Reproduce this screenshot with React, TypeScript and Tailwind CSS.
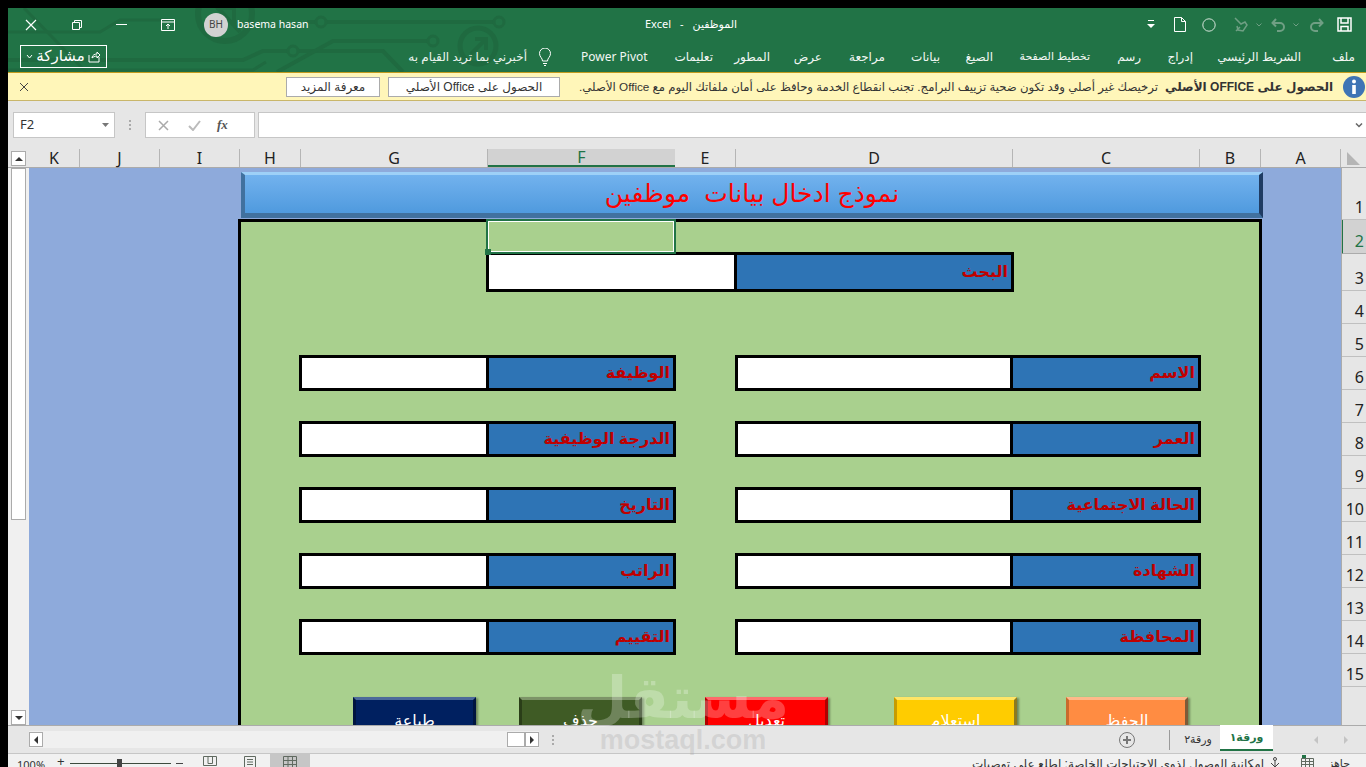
import React from "react";

const ui = "font-['Noto_Sans','DejaVu_Sans',sans-serif]";
const ar = "font-['Liberation_Sans','DejaVu_Sans',sans-serif]";

function Circuit() {
  return (
    <svg className="absolute inset-0 h-full w-full pointer-events-none" viewBox="0 0 1358 64" fill="none" stroke="#1f6a40" strokeWidth="3">
      <path d="M0 24H92L112 12H160" />
      <path d="M16 0L78 64" />
      <circle cx="217" cy="6" r="27" strokeWidth="6" />
      <path d="M208 -2L232 24M208 0H226V16" strokeWidth="4" />
      <path d="M299 14H308M318 14H486" strokeWidth="4" />
      <circle cx="313" cy="14" r="5" />
      <circle cx="491" cy="14" r="5" />
      <path d="M0 52H235L255 43H280M290 43H375L395 64" strokeWidth="4" />
      <circle cx="285" cy="43" r="5" />
      <path d="M0 62H245L258 54" />
      <path d="M269 64L325 33H420" strokeWidth="4" />
      <circle cx="425" cy="33" r="5" />
      <circle cx="470" cy="38" r="18" strokeWidth="5" />
      <path d="M463 46L478 31M467 31H478V42" strokeWidth="4" />
    </svg>
  );
}

function TitleBar() {
  return (
    <div className="relative h-[65px] shrink-0 bg-[#217346] border-b border-[#c29b1e] text-white">
      <Circuit />
      <div className="relative h-[33px] flex items-center text-[11px]">
        <svg className="ml-[16px] h-[14px] w-[14px]" viewBox="0 0 14 14" stroke="#fff" strokeWidth="1.2" fill="none"><path d="M2 2l10 10M12 2L2 12" /></svg>
        <svg className="ml-[33px] h-[12px] w-[12px]" viewBox="0 0 12 12" stroke="#fff" fill="none"><path d="M1.500 3.500h7v7h-7zM3.500 3.500v-2h7v7h-2" /></svg>
        <div className="ml-[33px] h-px w-[11px] bg-white" />
        <svg className="ml-[34px] h-[12px] w-[14px]" viewBox="0 0 14 12" stroke="#fff" fill="none"><path d="M.5.5h13v11H.5zM.5 3h13M7 10V5M5 7l2-2 2 2" /></svg>
        <div className={`ml-[29px] h-[24px] w-[24px] rounded-full bg-[#d2d2d2] text-[#444] text-[10px] flex items-center justify-center ${ui}`}>BH</div>
        <div className={`ml-[9px] w-[80px] text-[10.5px] ${ui}`}>basema hasan</div>
        <div className={`ml-[328px] flex gap-[9px] text-[11px] ${ui}`}>
          <span>Excel</span><span>-</span><span dir="rtl">الموظفين</span>
        </div>
        <svg className="ml-[410px] h-[9px] w-[8px]" viewBox="0 0 8 9" fill="#fff"><path d="M1 0h6v1H1zM0 4h8L4 8z" /></svg>
        <svg className="ml-[19px] h-[15px] w-[12px]" viewBox="0 0 12 15" stroke="#fff" fill="none"><path d="M.5.5h7l4 4v10H.5zM7.500.5v4h4" /></svg>
        <svg className="ml-[16px] h-[14px] w-[14px]" viewBox="0 0 14 14" stroke="#d5e4da" fill="none"><circle cx="7" cy="7" r="6.200" /></svg>
        <svg className="ml-[16px] h-[17px] w-[17px]" viewBox="0 0 17 17" stroke="#6f9f84" strokeWidth="1.500" fill="none"><path d="M3 2l6 6 4-2 2 3-4 6-5-1-1-4M4 15l4-4" /></svg>
        <svg className="ml-[7px] h-[4px] w-[6px]" viewBox="0 0 6 4" stroke="#6f9f84" fill="none"><path d="M.5.5L3 3 5.500.5" /></svg>
        <svg className="ml-[9px] h-[14px] w-[14px]" viewBox="0 0 14 14" stroke="#6f9f84" strokeWidth="2" fill="none"><path d="M5 1L1.500 5 5 8.500M2 5h7a3.500 3.500 0 010 8H6" /></svg>
        <svg className="ml-[8px] h-[4px] w-[6px]" viewBox="0 0 6 4" stroke="#6f9f84" fill="none"><path d="M.5.5L3 3 5.500.5" /></svg>
        <svg className="ml-[11px] h-[14px] w-[14px]" viewBox="0 0 14 14" stroke="#6f9f84" strokeWidth="2" fill="none"><path d="M9 1l3.500 4L9 8.500M12 5H5a3.500 3.500 0 000 8h3" /></svg>
        <svg className="ml-[13px] h-[15px] w-[15px]" viewBox="0 0 15 15" stroke="#fff" strokeWidth="1.500" fill="none"><path d="M1 1h13v13H1zM4 1v5h7V1M4 14V9.500h7V14" /></svg>
      </div>
      <div className="relative h-[31px] flex items-center text-[11px]">
        <div className={`ml-[12px] w-[87px] h-[23px] border border-white flex items-center justify-center gap-[3px] ${ar}`}>
          <svg className="h-[6px] w-[7px]" viewBox="0 0 7 6" stroke="#fff" fill="none"><path d="M1 1l2.500 3L6 1" /></svg>
          <span dir="rtl" className="text-[15px]">مشاركة</span>
          <svg className="h-[13px] w-[13px]" viewBox="0 0 13 13" stroke="#fff" fill="none"><path d="M1 5v7h10V7M4 8c0-3 3-4 5-4V2l3 3-3 3V6C7 6 5 7 4 8z" /></svg>
        </div>
        <div dir="rtl" className={`ml-[298px] w-[122px] whitespace-nowrap text-[12px] text-[#ecf3ee] ${ar}`}>أخبرني بما تريد القيام به</div>
        <svg className="ml-[11px] h-[18px] w-[14px]" viewBox="0 0 14 18" stroke="#fff" fill="none"><path d="M4.500 13c0-3-3-4-3-7.500a5.500 5.500 0 0111 0C12.500 9 9.500 10 9.500 13zM5 15.500h4M6 17.500h2" /></svg>
        <div className={`ml-[29px] flex items-center whitespace-nowrap ${ar} text-[12px] text-[#f3f7f4]`}>
          <span className={`w-[67px] text-[12px] ${ui}`}>Power Pivot</span>
          <span dir="rtl" className="ml-[27px] w-[38px] text-center">تعليمات</span>
          <span dir="rtl" className="ml-[27px] w-[30px] text-center">المطور</span>
          <span dir="rtl" className="ml-[28px] w-[24px] text-center">عرض</span>
          <span dir="rtl" className="ml-[28px] w-[35px] text-center">مراجعة</span>
          <span dir="rtl" className="ml-[27px] w-[28px] text-center">بيانات</span>
          <span dir="rtl" className="ml-[26px] w-[27px] text-center">الصيغ</span>
          <span dir="rtl" className="ml-[27px] w-[70px] text-center text-[11px]">تخطيط الصفحة</span>
          <span dir="rtl" className="ml-[28px] w-[23px] text-center">رسم</span>
          <span dir="rtl" className="ml-[28px] w-[24px] text-center">إدراج</span>
          <span dir="rtl" className="ml-[26px] w-[82px] text-center">الشريط الرئيسي</span>
          <span dir="rtl" className="ml-[34px] w-[20px] text-center">ملف</span>
        </div>
      </div>
    </div>
  );
}

function YellowBar() {
  return (
    <div className={`h-[28px] shrink-0 bg-[#fff6b9] border-b border-[#c9b66a] flex items-center text-[12px] text-[#333] ${ar}`}>
      <svg className="ml-[11px] h-[10px] w-[10px]" viewBox="0 0 10 10" stroke="#444" fill="none"><path d="M1 1l8 8M9 1L1 9" /></svg>
      <div dir="rtl" className="ml-[257px] h-[20px] w-[94px] bg-white border border-[#ababab] flex items-center justify-center">معرفة المزيد</div>
      <div dir="rtl" className="ml-[8px] h-[20px] w-[172px] bg-white border border-[#ababab] flex items-center justify-center whitespace-nowrap">الحصول على Office الأصلي</div>
      <div dir="rtl" className="ml-[10px] w-[588px] whitespace-nowrap text-[11.7px]">ترخيصك غير أصلي وقد تكون ضحية تزييف البرامج. تجنب انقطاع الخدمة وحافظ على أمان ملفاتك اليوم مع Office الأصلي.</div>
      <div dir="rtl" className="ml-[10px] w-[165px] whitespace-nowrap font-bold text-[12px]">الحصول على OFFICE الأصلي</div>
      <svg className="ml-[10px] h-[22px] w-[22px]" viewBox="0 0 22 22"><circle cx="11" cy="11" r="11" fill="#3f74b5" /><circle cx="11" cy="5.500" r="2" fill="#fff" /><rect x="9.200" y="9" width="3.600" height="9" fill="#fff" /></svg>
    </div>
  );
}

function FormulaBar() {
  return (
    <div className={`h-[48px] shrink-0 bg-[#e6e6e6] pt-[11px] pl-[5px] flex items-start text-[#333] ${ui}`}>
      <div className="h-[26px] w-[102px] bg-white border border-[#c6c6c6] flex items-center justify-between pl-[6px] pr-[5px] text-[13px]">
        F2
        <svg className="h-[4px] w-[7px]" viewBox="0 0 7 4" fill="#777"><path d="M0 0h7L3.500 4z" /></svg>
      </div>
      <div className="w-[30px] h-[26px] flex flex-col items-center justify-center gap-[2px]">
        <span className="h-[2px] w-[2px] bg-[#aaa]" /><span className="h-[2px] w-[2px] bg-[#aaa]" /><span className="h-[2px] w-[2px] bg-[#aaa]" />
      </div>
      <div className="h-[26px] w-[110px] bg-white border border-[#c6c6c6] flex items-center pl-[12px]">
        <svg className="h-[11px] w-[11px]" viewBox="0 0 11 11" stroke="#aaa" strokeWidth="1.500" fill="none"><path d="M1 1l9 9M10 1L1 10" /></svg>
        <svg className="ml-[19px] h-[11px] w-[13px]" viewBox="0 0 13 11" stroke="#bbb" strokeWidth="2" fill="none"><path d="M1 6l4 4 7-9" /></svg>
        <span className="ml-[16px] text-[13px] italic font-bold font-['Liberation_Serif',serif] text-[#555]">fx</span>
      </div>
      <div className="ml-[3px] h-[26px] flex-1 bg-white border-y border-l border-[#c6c6c6] flex items-center justify-end pr-[3px]">
        <svg className="h-[5px] w-[8px]" viewBox="0 0 8 5" stroke="#666" strokeWidth="1.500" fill="none"><path d="M1 .5l3 3 3-3" /></svg>
      </div>
    </div>
  );
}

const cols: [string, number][] = [["K", 51], ["J", 80], ["I", 80], ["H", 61], ["G", 187], ["F", 187], ["E", 61], ["D", 277], ["C", 187], ["B", 61], ["A", 80]];
const rows: [string, number][] = [["1", 52], ["2", 34], ["3", 37], ["4", 33], ["5", 33], ["6", 33], ["7", 33], ["8", 33], ["9", 33], ["10", 33], ["11", 33], ["12", 33], ["13", 33], ["14", 33], ["15", 33]];

function ColHeaders() {
  return (
    <div className={`h-[19px] shrink-0 flex bg-[#e6e6e6] border-b border-[#ababab] text-[16px] text-[#222] ${ui}`}>
      <div className="w-[21px] shrink-0 pl-[3px] pt-[2px]">
        <div className="h-[15px] w-[15px] bg-white border border-[#ababab] flex items-center justify-center">
          <svg className="h-[4px] w-[8px]" viewBox="0 0 8 4" fill="#333"><path d="M4 0l4 4H0z" /></svg>
        </div>
      </div>
      {cols.map(([c, w]) =>
        c === "F" ? (
          <div key={c} className="border-b-2 border-[#217346] bg-[#d2d2d2] text-[#217346] flex items-center justify-center" style={{ width: w }}>{c}</div>
        ) : (
          <div key={c} className="border-r border-[#b5b5b5] flex items-center justify-center" style={{ width: w }}>{c}</div>
        )
      )}
      <div className="flex-1 flex items-center justify-center">
        <svg className="h-[13px] w-[13px]" viewBox="0 0 13 13" fill="#b5b5b5"><path d="M0 0l13 13H0z" /></svg>
      </div>
    </div>
  );
}

function RowHeaders() {
  return (
    <div className={`w-[25px] shrink-0 border-l border-[#ababab] bg-[#e6e6e6] overflow-hidden text-[16px] text-[#222] ${ui}`}>
      {rows.map(([r, h]) => (
        <div key={r} style={{ height: h }} className={r === "2" ? "flex items-end justify-end pr-[2px] border-b border-[#ababab] bg-[#d2d2d2] text-[#217346] border-l-2 border-l-[#217346] -ml-px" : "flex items-end justify-end pr-[2px] border-b border-[#c0c0c0]"}>{r}</div>
      ))}
    </div>
  );
}

function Field({ label, width, whiteW }: { label: string; width: string; whiteW: string }) {
  return (
    <div className={`border-[3px] border-black flex ${width}`}>
      <div className={`bg-white border-r-[3px] border-black ${whiteW}`} />
      <div dir="rtl" className={`flex-1 flex items-center bg-[#2e74b5] pr-[3px] text-[16px] font-bold text-[#c00000] whitespace-nowrap ${ar}`}>{label}</div>
    </div>
  );
}

function Btn({ label, className }: { label: string; className: string }) {
  return (
    <div className={`h-[50px] border-[3px] flex items-start justify-center pt-[9px] text-white text-[16px] shadow-[2px_1px_2px_rgba(0,0,0,0.35)] ${ar} ${className}`}>
      <span dir="rtl">{label}</span>
    </div>
  );
}

function Sheet() {
  return (
    <div className="relative flex-1 bg-[#8eaadb] overflow-hidden">
      <div dir="rtl" className={`ml-[212px] mt-[4px] h-[46px] w-[1022px] border-x-[4px] border-t-[3px] border-b-[5px] border-t-[#9ed0f7] border-b-[#41719f] border-l-[#41719f] border-r-[#1f3c63] bg-gradient-to-b from-[#72b2ee] to-[#4f9ade] flex items-center justify-center text-[25px] text-[#ff0000] whitespace-pre ${ar}`}>
        نموذج ادخال بيانات  موظفين
      </div>
      <div className="relative ml-[209px] mt-[1px] w-[1024px] h-[520px] border-[3px] border-black bg-[#a9d08e]">
        <div className="absolute left-[245px] -top-[3px] h-[35px] w-[190px] border-2 border-[#217346] outline outline-1 -outline-offset-3 outline-white">
          <div className="absolute -left-[3px] -bottom-[3px] h-[6px] w-[6px] bg-[#217346]" />
        </div>
        <div className="pt-[30px] pl-[245px]">
          <Field label="البحث" width="w-[528px] h-[40px]" whiteW="w-[248px]" />
        </div>
        <div className="mt-[63px] pl-[58px] grid grid-cols-[377px_466px] gap-x-[59px] gap-y-[30px]">
          <Field label="الوظيفة" width="w-[377px] h-[36px]" whiteW="w-[187px]" />
          <Field label="الاسم" width="w-[466px] h-[36px]" whiteW="w-[275px]" />
          <Field label="الدرجة الوظيفية" width="w-[377px] h-[36px]" whiteW="w-[187px]" />
          <Field label="العمر" width="w-[466px] h-[36px]" whiteW="w-[275px]" />
          <Field label="التاريخ" width="w-[377px] h-[36px]" whiteW="w-[187px]" />
          <Field label="الحالة الاجتماعية" width="w-[466px] h-[36px]" whiteW="w-[275px]" />
          <Field label="الراتب" width="w-[377px] h-[36px]" whiteW="w-[187px]" />
          <Field label="الشهادة" width="w-[466px] h-[36px]" whiteW="w-[275px]" />
          <Field label="التقييم" width="w-[377px] h-[36px]" whiteW="w-[187px]" />
          <Field label="المحافظة" width="w-[466px] h-[36px]" whiteW="w-[275px]" />
        </div>
        <div className="mt-[42px] pl-[112px] flex">
          <Btn label="طباعة" className="w-[123px] bg-[#002060] border-t-[#4d6a9a] border-x-[#001540] border-b-[#001540]" />
          <Btn label="حذف" className="ml-[43px] w-[123px] bg-[#3f5b25] border-t-[#7d9468] border-x-[#2a3e18] border-b-[#2a3e18]" />
          <Btn label="تعديل" className="ml-[63px] w-[123px] bg-[#ff0000] border-t-[#ff6a6a] border-x-[#b00000] border-b-[#b00000]" />
          <Btn label="استعلام" className="ml-[66px] w-[123px] bg-[#ffcc00] border-t-[#ffe566] border-l-[#c79c00] border-r-[#8d7a20] border-b-[#c79c00]" />
          <Btn label="الحفظ" className="ml-[49px] w-[122px] bg-[#ff8c42] border-t-[#ffb98a] border-l-[#c96a2c] border-r-[#7d5a38] border-b-[#c96a2c]" />
        </div>
      </div>
    </div>
  );
}

function VScroll() {
  return (
    <div className="w-[21px] shrink-0 bg-[#f0f0f0] pl-[3px] flex flex-col">
      <div className="h-[352px] w-[15px] bg-white border border-[#ababab]" />
      <div className="flex-1" />
      <div className="h-[15px] w-[15px] bg-white border border-[#ababab] flex items-center justify-center">
        <svg className="h-[4px] w-[8px]" viewBox="0 0 8 4" fill="#333"><path d="M0 0h8L4 4z" /></svg>
      </div>
    </div>
  );
}

function TabsBar() {
  return (
    <div className={`h-[29px] shrink-0 bg-[#e6e6e6] border-t border-[#ababab] border-b border-b-[#c6c6c6] flex items-center text-[11px] text-[#333] ${ar}`}>
      <div className="ml-[21px] h-[17px] w-[510px] bg-[#f0f0f0] flex items-center">
        <div className="h-[15px] w-[14px] bg-white border border-[#ababab] flex items-center justify-center">
          <svg className="h-[8px] w-[4px]" viewBox="0 0 4 8" fill="#333"><path d="M4 0v8L0 4z" /></svg>
        </div>
        <div className="flex-1" />
        <div className="h-[15px] w-[18px] bg-white border border-[#ababab]" />
        <div className="h-[15px] w-[14px] bg-white border border-[#ababab] flex items-center justify-center">
          <svg className="h-[8px] w-[4px]" viewBox="0 0 4 8" fill="#333"><path d="M0 0l4 4-4 4z" /></svg>
        </div>
      </div>
      <div className="ml-[13px] flex flex-col gap-[2px]">
        <span className="h-[2px] w-[2px] bg-[#aaa]" /><span className="h-[2px] w-[2px] bg-[#aaa]" /><span className="h-[2px] w-[2px] bg-[#aaa]" />
      </div>
      <svg className="ml-[565px] h-[16px] w-[16px]" viewBox="0 0 16 16" fill="none" stroke="#777"><circle cx="8" cy="8" r="7.500" /><path d="M8 4v8M4 8h8" strokeWidth="2" /></svg>
      <div className="ml-[34px] h-[20px] w-px bg-[#9a9a9a]" />
      <div dir="rtl" className="ml-[13px] w-[30px] text-center whitespace-nowrap">ورقة٢</div>
      <div dir="rtl" className="ml-[7px] self-start -mt-px h-[26px] w-[53px] bg-white border-b-2 border-[#217346] text-[#217346] font-bold flex items-center justify-center">ورقة١</div>
      <svg className="ml-[41px] h-[8px] w-[4px]" viewBox="0 0 4 8" fill="#c4c4c4"><path d="M4 0v8L0 4z" /></svg>
      <svg className="ml-[26px] h-[8px] w-[4px]" viewBox="0 0 4 8" fill="#c4c4c4"><path d="M0 0l4 4-4 4z" /></svg>
    </div>
  );
}

function StatusBar() {
  return (
    <div className={`flex-1 bg-[#f1f1f1] flex items-start overflow-hidden text-[12px] text-[#333] ${ar}`}>
      <span className={`ml-[9px] mt-[3px] w-[30px] text-[11px] ${ui}`}>100%</span>
      <span className="ml-[10px] mt-[1px] w-[8px] text-[13px] leading-[14px]">+</span>
      <div className="relative ml-[5px] mt-[9px] h-px w-[101px] bg-[#3d4a3d]">
        <div className="absolute left-[47px] -top-[4px] h-[9px] w-[5px] bg-[#444]" />
      </div>
      <div className="ml-[5px] mt-[9px] h-px w-[7px] bg-[#444]" />
      <svg className="ml-[20px] mt-[2px] h-[12px] w-[14px]" viewBox="0 0 14 12" stroke="#606a60" fill="none"><path d="M.5.5h13v9h-13zM5 .5v7H9.500v-7" /></svg>
      <svg className="ml-[26px] mt-[2px] h-[12px] w-[14px]" viewBox="0 0 14 12" stroke="#606a60" fill="none"><path d="M1.500.5h11v12h-11zM4 3.500h6M4 6h6M4 8.500h6" /></svg>
      <div className="ml-[13px] flex h-[14px] w-[40px] items-start justify-center bg-[#c6c6c6] pt-[2px]">
        <svg className="h-[12px] w-[14px]" viewBox="0 0 14 12" stroke="#606a60" fill="none"><path d="M.5.5h13v11h-13zM.5 4.500h13M.5 8.500h13M5 .5v11M9.500 .5v11" /></svg>
      </div>
      <div dir="rtl" className="ml-[652px] mt-[1px] w-[302px] whitespace-nowrap">إمكانية الوصول لذوي الاحتياجات الخاصة: اطلع على توصيات</div>
      <svg className="ml-[5px] mt-[2px] h-[12px] w-[12px]" viewBox="0 0 12 12" stroke="#444" fill="none"><circle cx="6" cy="3" r="1.500" /><path d="M2 7l4 4 4-4M6 5v6" /></svg>
      <svg className="ml-[20px] mt-[1px] h-[13px] w-[13px]" viewBox="0 0 13 13" stroke="#606a60" fill="none"><path d="M.5 3.500h12v9H.5zM.5 6.500h12M.5 9.500h12M4.500 3.500v9M8.500 3.500v9" /><rect x="1" y="0" width="4" height="3" fill="#217346" stroke="none" /></svg>
      <div dir="rtl" className="ml-[14px] mt-[1px] whitespace-nowrap text-[11px]">جاهز</div>
    </div>
  );
}

function Watermark() {
  return (
    <div className="absolute left-[600px] top-[668px] w-[166px] flex flex-col items-center pointer-events-none">
      <div dir="rtl" className={`text-[58px] leading-[60px] font-bold text-white/25 ${ar}`}>مستقل</div>
      <div className="mt-[-4px] text-[27px] leading-[32px] font-bold text-[#9a9a9a]/25 font-['Liberation_Sans',sans-serif]">mostaql.com</div>
    </div>
  );
}

export default function App() {
  return (
    <div className="relative h-screen w-screen overflow-hidden bg-black pt-2 pl-2 flex flex-col">
      <TitleBar />
      <YellowBar />
      <FormulaBar />
      <ColHeaders />
      <div className="h-[557px] shrink-0 flex overflow-hidden bg-[#e6e6e6]">
        <VScroll />
        <Sheet />
        <RowHeaders />
      </div>
      <TabsBar />
      <StatusBar />
      <Watermark />
    </div>
  );
}
